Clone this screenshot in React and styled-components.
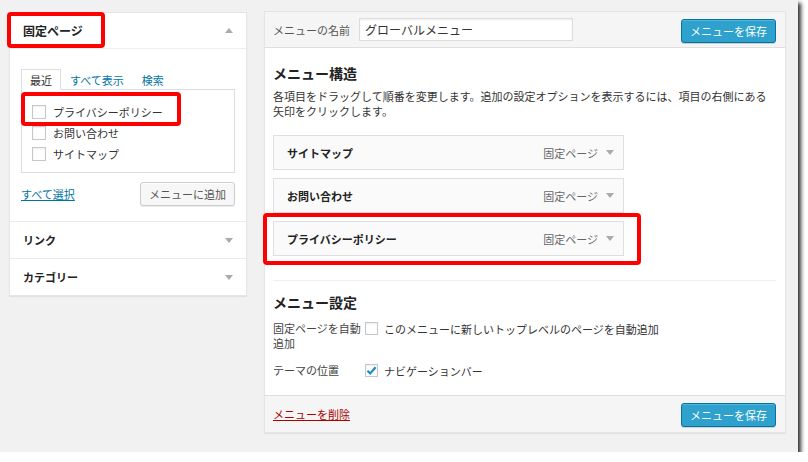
import React from 'react';
import styled, { createGlobalStyle } from 'styled-components';

const GlobalStyle = createGlobalStyle`
  body {
    margin: 0;
    background: #fff;
    font-family: "Noto Sans CJK JP", "Noto Sans", sans-serif;
    color: #333;
  }
  * { box-sizing: border-box; }
`;

const Screen = styled.div`
  width: 798px;
  height: 452px;
  background: #f1f1f1;
  box-shadow: 3px 3px 4px rgba(0, 0, 0, 0.8);
  display: flex;
  align-items: flex-start;
  gap: 17px;
  padding: 11px 0 0 9px;
`;

/* generic red marker drawn over the screenshot */
const Highlight = styled.div`
  position: absolute;
  left: ${p => p.$left}px;
  top: ${p => p.$top}px;
  width: ${p => p.$width}px;
  height: ${p => p.$height}px;
  border: 4px solid #ff0000;
  border-radius: 4px;
  pointer-events: none;
`;

const Caret = styled.span`
  width: 0;
  height: 0;
  border-left: 4px solid transparent;
  border-right: 4px solid transparent;
  ${p => p.$up
    ? 'border-bottom: 5px solid #aaa;'
    : 'border-top: 5px solid #aaa;'}
`;

/* ---------- left accordion ---------- */

const SidePanel = styled.div`
  width: 238px;
  margin-top: 1px;
  background: #fff;
  border: 1px solid #e5e5e5;
  box-shadow: 0 1px 1px rgba(0, 0, 0, 0.06);
`;

const SectionTitle = styled.div`
  position: relative;
  height: ${p => (p.$open ? 36 : 37)}px;
  padding: 0 13px 0 13px;
  display: flex;
  align-items: center;
  justify-content: space-between;
  font-size: ${p => (p.$open ? 12 : 11)}px;
  font-weight: bold;
  color: #222;
  border-top: ${p => (p.$first ? 'none' : '1px solid #e8e8e8')};
  border-bottom: ${p => (p.$open ? '1px solid #eee' : 'none')};
`;

const SectionBody = styled.div`
  padding: 20px 11px 15px;
`;

const Tabs = styled.div`
  display: flex;
  height: 21px;
  margin-bottom: -1px;
  position: relative;
  z-index: 1;
`;

const Tab = styled.div`
  padding: 0 8px;
  display: flex;
  align-items: center;
  font-size: 11px;
  color: ${p => (p.$active ? '#333' : '#0074a2')};
  background: ${p => (p.$active ? '#fff' : 'transparent')};
  border: 1px solid ${p => (p.$active ? '#ddd' : 'transparent')};
  border-bottom: 1px solid ${p => (p.$active ? '#fff' : 'transparent')};
`;

const TabPanel = styled.div`
  position: relative;
  height: 84px;
  border: 1px solid #ddd;
  padding: 11px 10px 0;
`;

const CheckRow = styled.label`
  height: 21px;
  display: flex;
  align-items: center;
  gap: 7px;
  font-size: 11px;
  color: #333;
`;

const Box = styled.span`
  width: 14px;
  height: 14px;
  flex: none;
  border: 1px solid #c4c8cc;
  background: #fff;
  box-shadow: inset 0 1px 2px rgba(0, 0, 0, 0.07);
  display: flex;
  align-items: center;
  justify-content: center;
`;

const Actions = styled.div`
  margin-top: 9px;
  display: flex;
  align-items: center;
  justify-content: space-between;
`;

const TextLink = styled.a`
  font-size: 11px;
  color: ${p => (p.$danger ? '#a00' : '#0074a2')};
  text-decoration: underline;
  cursor: pointer;
`;

const Button = styled.button`
  height: 24px;
  padding: 0 8px;
  font-family: inherit;
  font-size: 11px;
  border-radius: 3px;
  cursor: pointer;
  color: ${p => (p.$primary ? '#fff' : '#555')};
  background: ${p => (p.$primary ? '#2ea2cc' : '#f7f7f7')};
  border: 1px solid ${p => (p.$primary ? '#0074a2' : '#ccc')};
  box-shadow: ${p => (p.$primary
    ? 'inset 0 1px 0 rgba(120,200,230,.5), 0 1px 0 rgba(0,0,0,.15)'
    : 'inset 0 1px 0 #fff, 0 1px 0 rgba(0,0,0,.08)')};
`;

/* ---------- right editor ---------- */

const Editor = styled.div`
  width: 522px;
  background: #fff;
  border: 1px solid #e5e5e5;
  box-shadow: 0 1px 1px rgba(0, 0, 0, 0.06);
`;

const EditorBar = styled.div`
  height: ${p => (p.$bottom ? 37 : 36)}px;
  padding: 0 9px 0 8px;
  display: flex;
  align-items: center;
  background: #f5f5f5;
  border-bottom: ${p => (p.$bottom ? 'none' : '1px solid #dfdfdf')};
  border-top: ${p => (p.$bottom ? '1px solid #dfdfdf' : 'none')};
`;

const BarLabel = styled.span`
  font-size: 11px;
  color: #555;
`;

const NameInput = styled.input`
  margin-left: 9px;
  width: 214px;
  height: 23px;
  padding: 0 5px;
  font-family: inherit;
  font-size: 12px;
  color: #333;
  border: 1px solid #ddd;
  box-shadow: inset 0 1px 2px rgba(0, 0, 0, 0.07);
  outline: none;
`;

const Push = styled.div`
  margin-left: auto;
`;

const EditorBody = styled.div`
  padding: 0 9px 0 8px;
`;

const Block = styled.div`
  padding-bottom: ${p => p.$pad}px;
  border-bottom: ${p => (p.$divided ? '1px solid #eee' : 'none')};
`;

const Heading = styled.h3`
  margin: ${p => p.$top}px 0 0;
  font-size: 14px;
  line-height: 20px;
  font-weight: bold;
  color: #222;
`;

const Description = styled.p`
  margin: 6px 0 0;
  font-size: 11px;
  line-height: 15px;
  color: #333;
`;

const MenuList = styled.div`
  margin-top: 16px;
  display: flex;
  flex-direction: column;
  gap: 8px;
`;

const MenuItem = styled.div`
  position: relative;
  width: 351px;
  height: 35px;
  padding: 0 9px 0 13px;
  display: flex;
  align-items: center;
  background: #fafafa;
  border: 1px solid #dfdfdf;
`;

const ItemTitle = styled.span`
  flex: 1;
  font-size: 11px;
  font-weight: bold;
  color: #222;
`;

const ItemType = styled.span`
  font-size: 11px;
  color: #666;
  margin-right: 8px;
`;

const SettingRow = styled.div`
  margin-top: ${p => p.$top}px;
  display: flex;
  align-items: flex-start;
`;

const SettingLabel = styled.div`
  width: 92px;
  font-size: 11px;
  line-height: 15px;
  color: #444;
`;

const SettingControl = styled.label`
  display: flex;
  align-items: center;
  gap: 6px;
  height: 15px;
  font-size: 11px;
  color: #333;
`;

const SmallBox = styled(Box)`
  width: 13px;
  height: 13px;
`;

const Check = () => (
  <svg width="11" height="11" viewBox="0 0 11 11">
    <path d="M1.5 5.8 L4.2 8.5 L9.6 2.2" fill="none" stroke="#1e8cbe" strokeWidth="2.2" />
  </svg>
);

const pages = ['プライバシーポリシー', 'お問い合わせ', 'サイトマップ'];
const menuItems = ['サイトマップ', 'お問い合わせ', 'プライバシーポリシー'];

export default function App() {
  return (
    <>
      <GlobalStyle />
      <Screen>
        <SidePanel>
          <SectionTitle $open $first>
            固定ページ
            <Caret $up />
            <Highlight $left={-3} $top={-1} $width={98} $height={36} />
          </SectionTitle>
          <SectionBody>
            <Tabs>
              <Tab $active>最近</Tab>
              <Tab>すべて表示</Tab>
              <Tab>検索</Tab>
            </Tabs>
            <TabPanel>
              {pages.map(p => (
                <CheckRow key={p}>
                  <Box />
                  {p}
                </CheckRow>
              ))}
              <Highlight $left={-1} $top={2} $width={160} $height={34} />
            </TabPanel>
            <Actions>
              <TextLink>すべて選択</TextLink>
              <Button>メニューに追加</Button>
            </Actions>
          </SectionBody>
          <SectionTitle>
            リンク
            <Caret />
          </SectionTitle>
          <SectionTitle>
            カテゴリー
            <Caret />
          </SectionTitle>
        </SidePanel>

        <Editor>
          <EditorBar>
            <BarLabel>メニューの名前</BarLabel>
            <NameInput defaultValue="グローバルメニュー" />
            <Push>
              <Button $primary>メニューを保存</Button>
            </Push>
          </EditorBar>
          <EditorBody>
            <Block $divided $pad={24}>
              <Heading $top={15}>メニュー構造</Heading>
              <Description>
                各項目をドラッグして順番を変更します。追加の設定オプションを表示するには、項目の右側にある矢印をクリックします。
              </Description>
              <MenuList>
                {menuItems.map((m, i) => (
                  <MenuItem key={m}>
                    <ItemTitle>{m}</ItemTitle>
                    <ItemType>固定ページ</ItemType>
                    <Caret />
                    {i === 2 && <Highlight $left={-11} $top={-9} $width={378} $height={52} />}
                  </MenuItem>
                ))}
              </MenuList>
            </Block>
            <Block $pad={17}>
              <Heading $top={11}>メニュー設定</Heading>
              <SettingRow $top={9}>
                <SettingLabel>固定ページを自動追加</SettingLabel>
                <SettingControl>
                  <SmallBox />
                  このメニューに新しいトップレベルのページを自動追加
                </SettingControl>
              </SettingRow>
              <SettingRow $top={12}>
                <SettingLabel>テーマの位置</SettingLabel>
                <SettingControl>
                  <SmallBox><Check /></SmallBox>
                  ナビゲーションバー
                </SettingControl>
              </SettingRow>
            </Block>
          </EditorBody>
          <EditorBar $bottom>
            <TextLink $danger>メニューを削除</TextLink>
            <Push>
              <Button $primary>メニューを保存</Button>
            </Push>
          </EditorBar>
        </Editor>
      </Screen>
    </>
  );
}
